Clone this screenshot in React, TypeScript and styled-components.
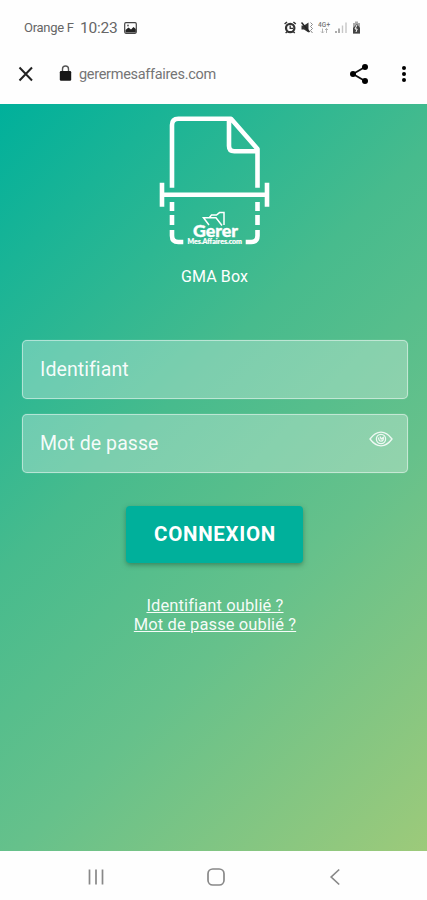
import React from 'react';
import styled, { createGlobalStyle } from 'styled-components';

const GlobalStyle = createGlobalStyle`
  * { box-sizing: border-box; }
  body { margin: 0; background: #fff; font-family: Roboto, sans-serif; }
`;

const Screen = styled.div`
  display: flex;
  flex-direction: column;
  width: 427px;
  height: 900px;
  overflow: hidden;
  background: #fefefe;
`;

const StatusBar = styled.div`
  display: flex;
  align-items: center;
  height: 48px;
  padding: 7px 66px 0 24px;
  color: #666;
`;

const Carrier = styled.span`
  width: 56px;
  font-size: 13px;
  letter-spacing: -0.3px;
  white-space: nowrap;
`;

const Clock = styled.span`
  width: 44px;
  font-size: 15.5px;
  letter-spacing: -0.25px;
`;

const StatusIcons = styled.div`
  display: flex;
  align-items: center;
  gap: 4px;
  margin-left: auto;
`;

const BrowserBar = styled.div`
  display: flex;
  align-items: center;
  height: 56px;
  padding: 0 15px 5px 17px;
`;

const Address = styled.span`
  margin-left: 7px;
  flex: 1;
  padding-top: 1px;
  color: #757575;
  font-size: 14.5px;
  letter-spacing: -0.3px;
`;

const Icon = styled.svg<{ $left?: number }>`
  display: block;
  flex: none;
  margin-left: ${({ $left = 0 }) => $left}px;
`;

const Main = styled.main`
  display: flex;
  flex-direction: column;
  align-items: center;
  height: 747px;
  padding: 8px 19px 0 22px;
  background: linear-gradient(135deg, #00b09b 0%, #47bb8d 40%, #66c18b 65%, #9dca7a 100%);
  color: #fff;
`;

const AppName = styled.h1`
  height: 20px;
  margin: 19px 0 53px;
  padding-right: 1px;
  font-size: 16px;
  font-weight: 400;
  line-height: 20px;
  letter-spacing: 0.12px;
`;

const Form = styled.form`
  display: flex;
  flex-direction: column;
  align-items: center;
  gap: 15px;
  width: 100%;
`;

const Field = styled.label`
  display: flex;
  align-items: center;
  width: 100%;
  height: 59px;
  padding: 0 14px 0 17px;
  border: 1px solid rgba(255, 255, 255, 0.48);
  border-radius: 5px;
  background: rgba(255, 255, 255, 0.29);
  box-shadow: 0 0 1px rgba(255, 255, 255, 0.5);
`;

const Input = styled.input`
  flex: 1;
  min-width: 0;
  padding: 0;
  border: 0;
  outline: 0;
  background: transparent;
  color: #fff;
  font: 400 19.5px Roboto, sans-serif;
  letter-spacing: 0.08px;
  &::placeholder { color: rgba(255, 255, 255, 0.95); opacity: 1; }
`;

const EyeButton = styled.button`
  margin: 0 0 9px;
  padding: 0;
  border: 0;
  background: none;
`;

const Submit = styled.button`
  width: 177px;
  height: 57px;
  margin: 18px 1px 0 0;
  padding: 0 0 2px 1px;
  border: 0;
  border-radius: 4px;
  background: #00b09b;
  box-shadow: 0 2px 5px rgba(30, 80, 50, 0.5);
  color: #fff;
  font: 700 20.5px Roboto, sans-serif;
  letter-spacing: 0.7px;
`;

const Links = styled.nav`
  display: flex;
  flex-direction: column;
  align-items: center;
  margin-top: 33px;
`;

const HelpLink = styled.a`
  color: rgba(255, 255, 255, 0.95);
  font-size: 16.5px;
  line-height: 19px;
  letter-spacing: 0.11px;
  text-decoration: underline;
`;

const NavBar = styled.footer`
  display: flex;
  align-items: center;
  justify-content: space-between;
  height: 49px;
  padding: 2px 82px 0 86px;
`;

const Logo = () => (
  <Icon width="114" height="136" viewBox="158 112 114 136" fill="none" stroke="#fff" strokeWidth="4.6">
    <path d="M172 187.7V125q0-6.3 6.3-6.3H231L257.5 149V187.7M229 119V146q0 5.3 5.3 5.3H258" strokeLinejoin="round" />
    <path d="M162 194.7H267M162 182.7V206.7M267 182.7V206.7" />
    <path d="M172 202V211M172 215V225M172 230V235.7q0 6.3 6.3 6.3H183.3M257.5 202V211M257.5 215V225M257.5 230V235.7q0 6.3-6.3 6.3H245.7" />
    <path d="M209 225L203.5 217.8H216L222 225.5M209.5 217.5L211.5 215H216.5L219.5 212.6H224V225" strokeWidth="1.5" />
    <text x="193" y="237" fill="#fff" stroke="#fff" strokeWidth="0.35" fontFamily="Lato, sans-serif" fontWeight="900" fontSize="17" textLength="45" lengthAdjust="spacingAndGlyphs">Gerer</text>
    <text x="187.5" y="244" fill="#fff" stroke="#fff" strokeWidth="0.2" fontFamily="Lato, sans-serif" fontWeight="900" fontSize="6.8" textLength="54.5" lengthAdjust="spacingAndGlyphs">Mes.Affaires.com</text>
  </Icon>
);

const PictureIcon = () => (
  <Icon width="13" height="12" viewBox="0 0 13 12">
    <rect x=".7" y=".7" width="11.6" height="10.6" rx="1.2" fill="none" stroke="#444" strokeWidth="1.2" />
    <path d="M1.5 10.5V8L4.5 5.5 7 7.5 9.5 5 11.8 7V10.5Z" fill="#222" />
    <circle cx="4" cy="3.5" r=".9" fill="#555" />
  </Icon>
);

const AlarmIcon = () => (
  <Icon width="13" height="13" viewBox="0 0 13 13" fill="none" stroke="#333">
    <circle cx="6.2" cy="7" r="4.2" strokeWidth="2.2" />
    <path d="M.6 3L3 1M11.8 3L9.4 1M1.6 12L3.5 10.5M10.8 12L9 10.5" strokeWidth="1.5" />
    <path d="M6.2 4.5V7.4H9" strokeWidth="1.3" />
  </Icon>
);

const MuteIcon = () => (
  <Icon width="13" height="13" viewBox="0 0 13 13">
    <path d="M.5 4.5H3L7.5 1.5V11.5L3 8.5H.5Z" fill="#333" />
    <path d="M.5 1.5L8.5 11" stroke="#222" strokeWidth="1.4" />
    <path d="M9.5 1.5L11.5 3.5 9.5 5.5 11.5 7.5 9.5 9.5 11.5 12" fill="none" stroke="#888" />
  </Icon>
);

const DataIcon = () => (
  <Icon width="13" height="13" viewBox="0 0 13 13">
    <text x="0" y="5.8" fontFamily="Roboto, sans-serif" fontSize="6.5" fontWeight="500" fill="#777" textLength="12">4G+</text>
    <path d="M4.5 7.5V12M3 10.5L4.5 12 6 10.5M8.5 12V7.5M7 9L8.5 7.5 10 9" fill="none" stroke="#aaa" strokeWidth=".9" />
  </Icon>
);

const SignalIcon = () => (
  <Icon width="12" height="13" viewBox="0 0 12 13" strokeWidth="1.4">
    <path d="M1 12V10M4 12V7.5" stroke="#888" />
    <path d="M7.5 12V4.5M11 12V1.5" stroke="#c7c7c7" />
  </Icon>
);

const BatteryIcon = () => (
  <Icon $left={1} width="9" height="13" viewBox="0 0 9 13">
    <path d="M3 .5H6V2H8V12.5H1V2H3Z" fill="#aaa" />
    <path d="M1 7L5 3 8 7V12.5H1Z" fill="#444" />
    <path d="M5 4L3 8H5.2L4 11" fill="none" stroke="#fff" strokeWidth="1" />
  </Icon>
);

const CloseIcon = () => (
  <Icon width="18" height="18" viewBox="0 0 18 18">
    <path d="M2.5 2.5L15 15.5M15 2.5L2.5 15.5" stroke="#222" strokeWidth="2" />
  </Icon>
);

const LockIcon = () => (
  <Icon $left={24} width="13" height="17" viewBox="0 0 13 17">
    <path d="M3.5 7V4Q3.5 1 6.5 1T9.5 4V7" fill="none" stroke="#555" strokeWidth="1.4" />
    <rect x=".8" y="6" width="11.4" height="9.8" rx="1.2" fill="#171717" />
  </Icon>
);

const ShareIcon = () => (
  <Icon width="20" height="22" viewBox="0 0 20 22">
    <path d="M16 4L4 11 16 18" fill="none" stroke="#111" strokeWidth="1.8" />
    <circle cx="16" cy="4" r="3" /><circle cx="4" cy="11" r="3" /><circle cx="16" cy="18" r="3" />
  </Icon>
);

const MoreIcon = () => (
  <Icon $left={27} width="16" height="20" viewBox="0 0 16 20">
    <circle cx="8" cy="4" r="2" /><circle cx="8" cy="10" r="2" /><circle cx="8" cy="16" r="2" />
  </Icon>
);

const EyeIcon = () => (
  <Icon width="24" height="16" viewBox="0 0 24 16" fill="none" stroke="rgba(255,255,255,.85)" strokeWidth="1.3">
    <path d="M1 8Q6 1.2 12 1.2T23 8Q18 14.8 12 14.8T1 8Z" />
    <circle cx="12" cy="8" r="4.6" />
    <path d="M9.5 6.5Q9.8 10.3 12.2 10.1T14.3 6.5L12.2 8 11 5.5" />
  </Icon>
);

export default function App() {
  return (
    <>
      <GlobalStyle />
      <Screen>
        <StatusBar>
          <Carrier>Orange F</Carrier>
          <Clock>10:23</Clock>
          <PictureIcon />
          <StatusIcons>
            <AlarmIcon /><MuteIcon /><DataIcon /><SignalIcon /><BatteryIcon />
          </StatusIcons>
        </StatusBar>
        <BrowserBar>
          <CloseIcon />
          <LockIcon />
          <Address>gerermesaffaires.com</Address>
          <ShareIcon />
          <MoreIcon />
        </BrowserBar>
        <Main>
          <Logo />
          <AppName>GMA Box</AppName>
          <Form onSubmit={(event) => event.preventDefault()}>
            <Field><Input placeholder="Identifiant" aria-label="Identifiant" /></Field>
            <Field>
              <Input type="password" placeholder="Mot de passe" aria-label="Mot de passe" />
              <EyeButton type="button" aria-label="Afficher le mot de passe"><EyeIcon /></EyeButton>
            </Field>
            <Submit type="submit">CONNEXION</Submit>
          </Form>
          <Links>
            <HelpLink href="#identifiant">Identifiant oublié ?</HelpLink>
            <HelpLink href="#mot-de-passe">Mot de passe oublié ?</HelpLink>
          </Links>
        </Main>
        <NavBar>
          <Icon width="20" height="20" viewBox="0 0 20 20">
            <path d="M3.5 2.5V17.5M10 2.5V17.5M16.5 2.5V17.5" stroke="#888" strokeWidth="1.7" />
          </Icon>
          <Icon width="20" height="20" viewBox="0 0 20 20">
            <rect x="2" y="2" width="16" height="16" rx="4.8" fill="none" stroke="#888" strokeWidth="1.7" />
          </Icon>
          <Icon width="20" height="20" viewBox="0 0 20 20">
            <path d="M14.2 2.5L6.2 10 14.2 17.5" fill="none" stroke="#888" strokeWidth="1.7" />
          </Icon>
        </NavBar>
      </Screen>
    </>
  );
}
